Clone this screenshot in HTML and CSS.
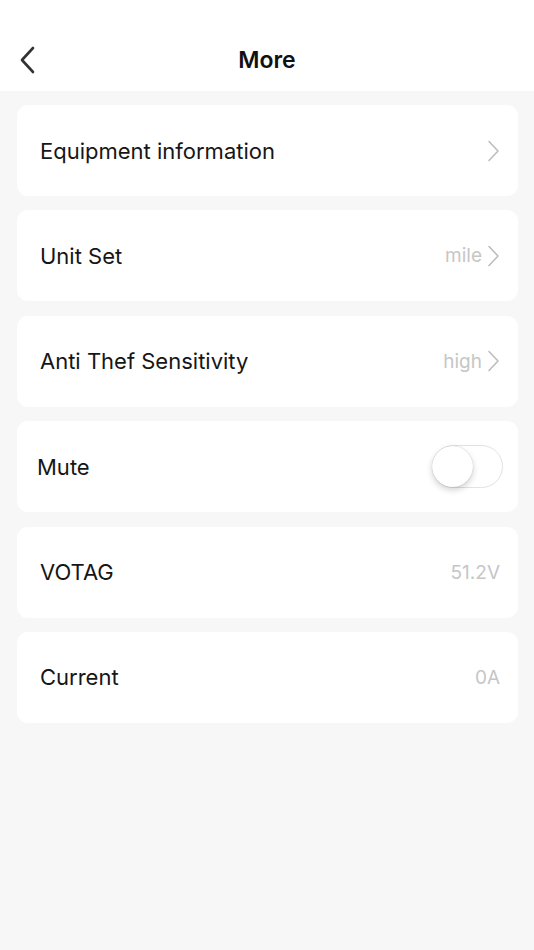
FILE: index.html
```html
<!DOCTYPE html>
<html>
<head>
<meta charset="utf-8">
<link rel="stylesheet" href="styles.css">
</head>
<body>
<div class="page">
  <header class="topbar">
    <span class="back">
      <svg width="16" height="28" viewBox="0 0 16 28"><path d="M14 2 L3 14 L14 26" fill="none" stroke="#333" stroke-width="2.6" stroke-linecap="round" stroke-linejoin="round"/></svg>
    </span>
    <h1 class="title">More</h1>
  </header>
  <main class="list">
    <div class="card">
      <span class="label">Equipment information</span>
      <span class="right"><svg class="chev" width="13" height="22" viewBox="0 0 13 22"><path d="M2 1.5 L11 11 L2 20.5" fill="none" stroke="#bdbdbd" stroke-width="1.6" stroke-linecap="round" stroke-linejoin="round"/></svg></span>
    </div>
    <div class="card">
      <span class="label">Unit Set</span>
      <span class="right"><span class="value">mile</span><svg class="chev" width="13" height="22" viewBox="0 0 13 22"><path d="M2 1.5 L11 11 L2 20.5" fill="none" stroke="#bdbdbd" stroke-width="1.6" stroke-linecap="round" stroke-linejoin="round"/></svg></span>
    </div>
    <div class="card">
      <span class="label">Anti Thef Sensitivity</span>
      <span class="right"><span class="value">high</span><svg class="chev" width="13" height="22" viewBox="0 0 13 22"><path d="M2 1.5 L11 11 L2 20.5" fill="none" stroke="#bdbdbd" stroke-width="1.6" stroke-linecap="round" stroke-linejoin="round"/></svg></span>
    </div>
    <div class="card card-mute">
      <span class="label">Mute</span>
      <span class="toggle"><span class="knob"></span></span>
    </div>
    <div class="card">
      <span class="label">VOTAG</span>
      <span class="right"><span class="value value-end">51.2V</span></span>
    </div>
    <div class="card">
      <span class="label">Current</span>
      <span class="right"><span class="value value-end">0A</span></span>
    </div>
  </main>
</div>
</body>
</html>
```
FILE: styles.css
```css
* { box-sizing: border-box; }
html, body { margin: 0; padding: 0; }
body {
  background: #f7f7f7;
  font-family: Inter, "Liberation Sans", Arial, sans-serif;
  color: #1a1a1a;
}
.page { width: 534px; min-height: 950px; background: #f7f7f7; }
.topbar {
  height: 91px;
  background: #ffffff;
  display: flex;
  align-items: center;
  justify-content: center;
  position: relative;
  padding-top: 29px;
}
.back {
  position: absolute;
  left: 19px;
  top: 46px;
  display: flex;
}
.title {
  margin: 0;
  font-size: 23px;
  font-weight: 600;
  color: #111;
}
.list {
  display: flex;
  flex-direction: column;
  gap: 14.4px;
  padding: 14px 16px 0 17px;
}
.card {
  height: 91px;
  background: #fff;
  border-radius: 11px;
  display: flex;
  align-items: center;
  justify-content: space-between;
  padding: 0 18px 0 23px;
}
.card-mute { padding-left: 20px; padding-right: 15px; }
.label {
  font-size: 22px;
  color: #161616;
}
.right {
  display: flex;
  align-items: center;
  gap: 5px;
}
.value {
  font-size: 19px;
  color: #c6c6c6;
}
.chev { display: block; }
.toggle {
  width: 71px;
  height: 43px;
  border: 1.5px solid #e2e2e2;
  border-radius: 22px;
  background: #fff;
  display: flex;
  align-items: center;
}
.knob {
  width: 41px;
  height: 41px;
  border-radius: 50%;
  background: #fff;
  box-shadow: 0 3px 6px rgba(0,0,0,0.18), 0 0 1px rgba(0,0,0,0.25);
  margin-left: -1px;
}
```
